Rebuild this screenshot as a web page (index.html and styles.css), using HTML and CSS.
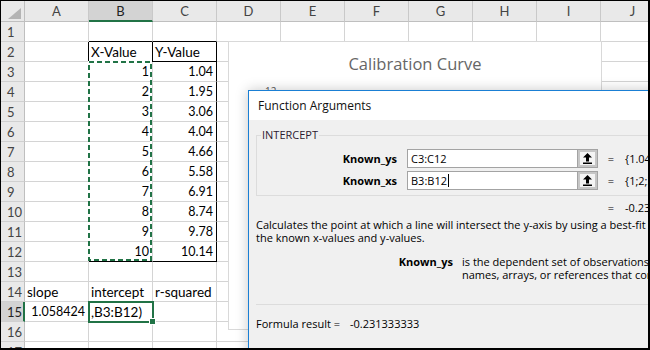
FILE: index.html
```html
<!DOCTYPE html>
<html>
<head>
<meta charset="utf-8">
<link rel="stylesheet" href="styles.css">
</head>
<body>
<div class="frame">
  <div class="sheet">
    <div class="ch corner"><svg width="13" height="11" viewBox="0 0 13 11"><polygon points="13,0 13,11 0,11" fill="#b4b4b4"/></svg></div>
    <div class="ch">A</div><div class="ch sel">B</div><div class="ch">C</div><div class="ch">D</div><div class="ch">E</div><div class="ch">F</div><div class="ch">G</div><div class="ch">H</div><div class="ch">I</div><div class="ch">J</div>

    <div class="rh">1</div><div class="c"></div><div class="c bb"></div><div class="c bb"></div><div class="c"></div><div class="c"></div><div class="c"></div><div class="c"></div><div class="c"></div><div class="c"></div><div class="c"></div>
    <div class="rh">2</div><div class="c br"></div><div class="c br bb">X-Value</div><div class="c br bb">Y-Value</div><div class="c"></div><div class="c"></div><div class="c"></div><div class="c"></div><div class="c"></div><div class="c"></div><div class="c"></div>
    <div class="rh">3</div><div class="c"></div><div class="c n">1</div><div class="c n br">1.04</div><div class="c"></div><div class="c"></div><div class="c"></div><div class="c"></div><div class="c"></div><div class="c"></div><div class="c"></div>
    <div class="rh">4</div><div class="c"></div><div class="c n">2</div><div class="c n br">1.95</div><div class="c"></div><div class="c"></div><div class="c"></div><div class="c"></div><div class="c"></div><div class="c"></div><div class="c"></div>
    <div class="rh">5</div><div class="c"></div><div class="c n">3</div><div class="c n br">3.06</div><div class="c"></div><div class="c"></div><div class="c"></div><div class="c"></div><div class="c"></div><div class="c"></div><div class="c"></div>
    <div class="rh">6</div><div class="c"></div><div class="c n">4</div><div class="c n br">4.04</div><div class="c"></div><div class="c"></div><div class="c"></div><div class="c"></div><div class="c"></div><div class="c"></div><div class="c"></div>
    <div class="rh">7</div><div class="c"></div><div class="c n">5</div><div class="c n br">4.66</div><div class="c"></div><div class="c"></div><div class="c"></div><div class="c"></div><div class="c"></div><div class="c"></div><div class="c"></div>
    <div class="rh">8</div><div class="c"></div><div class="c n">6</div><div class="c n br">5.58</div><div class="c"></div><div class="c"></div><div class="c"></div><div class="c"></div><div class="c"></div><div class="c"></div><div class="c"></div>
    <div class="rh">9</div><div class="c"></div><div class="c n">7</div><div class="c n br">6.91</div><div class="c"></div><div class="c"></div><div class="c"></div><div class="c"></div><div class="c"></div><div class="c"></div><div class="c"></div>
    <div class="rh">10</div><div class="c"></div><div class="c n">8</div><div class="c n br">8.74</div><div class="c"></div><div class="c"></div><div class="c"></div><div class="c"></div><div class="c"></div><div class="c"></div><div class="c"></div>
    <div class="rh">11</div><div class="c"></div><div class="c n">9</div><div class="c n br">9.78</div><div class="c"></div><div class="c"></div><div class="c"></div><div class="c"></div><div class="c"></div><div class="c"></div><div class="c"></div>
    <div class="rh">12</div><div class="c"></div><div class="c n bb">10</div><div class="c n br bb">10.14</div><div class="c"></div><div class="c"></div><div class="c"></div><div class="c"></div><div class="c"></div><div class="c"></div><div class="c"></div>
    <div class="rh">13</div><div class="c"></div><div class="c"></div><div class="c"></div><div class="c"></div><div class="c"></div><div class="c"></div><div class="c"></div><div class="c"></div><div class="c"></div><div class="c"></div>
    <div class="rh">14</div><div class="c">slope</div><div class="c">intercept</div><div class="c">r-squared</div><div class="c"></div><div class="c"></div><div class="c"></div><div class="c"></div><div class="c"></div><div class="c"></div><div class="c"></div>
    <div class="rh sel">15</div><div class="c n">1.058424</div><div class="c active">,B3:B12)</div><div class="c"></div><div class="c"></div><div class="c"></div><div class="c"></div><div class="c"></div><div class="c"></div><div class="c"></div><div class="c"></div>
    <div class="rh">16</div><div class="c"></div><div class="c"></div><div class="c"></div><div class="c"></div><div class="c"></div><div class="c"></div><div class="c"></div><div class="c"></div><div class="c"></div><div class="c"></div>
    <div class="rh">17</div><div class="c"></div><div class="c"></div><div class="c"></div><div class="c"></div><div class="c"></div><div class="c"></div><div class="c"></div><div class="c"></div><div class="c"></div><div class="c"></div>
  </div>

  <svg class="ants" width="65" height="200" viewBox="0 0 65 200">
    <rect x="1" y="1" width="62" height="198" fill="none" stroke="#ffffff" stroke-width="2"/>
    <rect x="1" y="1" width="62" height="198" fill="none" stroke="#217346" stroke-width="2" stroke-dasharray="5 3"/>
  </svg>

  <div class="chart">
    <div class="chart-title">Calibration Curve</div>
    <div class="axis-label">12</div>
  </div>

  <div class="dialog">
    <div class="dlg-title">Function Arguments</div>
    <div class="dlg-body">
      <fieldset class="group">
        <legend>INTERCEPT</legend>
        <div class="arg">
          <span class="arg-name">Known_ys</span>
          <span class="ref"><span class="ref-text">C3:C12</span><span class="ref-btn"><svg width="9" height="11" viewBox="0 0 9 11"><path d="M4.5 0 L9 4.5 L6 4.5 L6 8.5 L3 8.5 L3 4.5 L0 4.5 Z" fill="#000"/><rect x="0" y="9.5" width="9" height="1.5" fill="#000"/></svg></span></span>
          <span class="eq">=</span>
          <span class="val">{1.04;1.95;3.06;4.04;4.66;5.58;6.91;8.74;9.78;10.14}</span>
        </div>
        <div class="arg">
          <span class="arg-name">Known_xs</span>
          <span class="ref"><span class="ref-text">B3:B12<span class="caret"></span></span><span class="ref-btn"><svg width="9" height="11" viewBox="0 0 9 11"><path d="M4.5 0 L9 4.5 L6 4.5 L6 8.5 L3 8.5 L3 4.5 L0 4.5 Z" fill="#000"/><rect x="0" y="9.5" width="9" height="1.5" fill="#000"/></svg></span></span>
          <span class="eq">=</span>
          <span class="val">{1;2;3;4;5;6;7;8;9;10}</span>
        </div>
      </fieldset>
      <div class="result-row"><span class="eq">=</span><span class="val">-0.231333333</span></div>
      <p class="desc">Calculates the point at which a line will intersect the y-axis by using a best-fit regression line plotted through<br>the known x-values and y-values.</p>
      <div class="param">
        <span class="param-name">Known_ys</span>
        <span class="param-desc">is the dependent set of observations or data and can be numbers or<br>names, arrays, or references that contain numbers.</span>
      </div>
      <div class="sep"></div>
      <div class="formula">Formula result =<span class="formula-val">-0.231333333</span></div>
    </div>
  </div>
</div>
</body>
</html>
```

FILE: styles.css
```css
html, body {
  margin: 0;
  padding: 0;
  background: #ffffff;
}

.frame {
  position: relative;
  width: 650px;
  height: 350px;
  box-sizing: border-box;
  border-style: solid;
  border-color: #000;
  border-width: 1px 2px 2px 1px;
  overflow: hidden;
  background: #fff;
}

.sheet {
  display: grid;
  grid-template-columns: 24px repeat(10, 64px);
  grid-template-rows: 21px;
  grid-auto-rows: 20px;
  width: max-content;
  font-family: Lato, "Liberation Sans", sans-serif;
}

.ch {
  box-sizing: border-box;
  background: #e9e9e9;
  border-right: 1px solid #c9c9c9;
  border-bottom: 1px solid #bfbfbf;
  color: #444;
  font-size: 13px;
  line-height: 20px;
  text-align: center;
}

.ch.sel {
  background: #d3d3d3;
  border-bottom: 2px solid #217346;
  color: #222;
}

.corner {
  display: flex;
  align-items: flex-end;
  justify-content: flex-end;
  padding: 0 3px 2px 0;
  border-right: 1px solid #bfbfbf;
}

.corner svg {
  display: block;
}

.rh {
  box-sizing: border-box;
  background: #e9e9e9;
  border-right: 1px solid #bfbfbf;
  border-bottom: 1px solid #d0d0d0;
  color: #444;
  font-size: 13px;
  line-height: 16px;
  padding: 0 0 1px 6px;
  display: flex;
  align-items: flex-end;
}

.rh.sel {
  background: #d3d3d3;
  border-right: 2px solid #217346;
  color: #222;
}

.c {
  box-sizing: border-box;
  border-right: 1px solid #d4d4d4;
  border-bottom: 1px solid #d4d4d4;
  display: flex;
  align-items: flex-end;
  padding: 0 3px 1px 2px;
  font-size: 13.5px;
  line-height: 16px;
  color: #000;
  white-space: nowrap;
  overflow: hidden;
}

.c.n {
  justify-content: flex-end;
  font-size: 12.5px;
}

.c.br {
  border-right-color: #000;
}

.c.bb {
  border-bottom-color: #000;
}

.c.active {
  position: relative;
  overflow: visible;
  outline: 2px solid #217346;
  outline-offset: -1px;
  z-index: 2;
  padding-left: 2px;
}

.c.active::after {
  content: "";
  position: absolute;
  right: -3px;
  bottom: -3px;
  width: 5px;
  height: 5px;
  background: #217346;
  border: 1px solid #fff;
  box-sizing: content-box;
  margin: -1px;
}

.ants {
  position: absolute;
  left: 87px;
  top: 60px;
  z-index: 3;
}

.chart {
  position: absolute;
  left: 227px;
  top: 40px;
  width: 374px;
  height: 289px;
  box-sizing: border-box;
  background: #fff;
  border: 1px solid #d9d9d9;
  z-index: 4;
}

.chart-title {
  margin-top: 11px;
  text-align: center;
  font-family: "Open Sans", Lato, sans-serif;
  font-weight: 400;
  font-size: 16.5px;
  line-height: 22px;
  color: #666;
}

.axis-label {
  position: absolute;
  left: 36px;
  top: 42px;
  font-family: "Open Sans", sans-serif;
  font-size: 10px;
  color: #595959;
}

.dialog {
  position: absolute;
  left: 247px;
  top: 89px;
  width: 430px;
  height: 280px;
  box-sizing: border-box;
  border: 1px solid #1a7fd4;
  background: #f0f0f0;
  box-shadow: 0 0 12px rgba(0, 0, 0, 0.22);
  z-index: 5;
  font-family: "Open Sans", "Noto Sans", sans-serif;
  font-size: 11px;
  color: #000;
}

.dlg-title {
  height: 29px;
  background: #fff;
  padding-left: 9px;
  font-size: 12px;
  line-height: 30px;
  color: #111;
}

.dlg-body {
  padding: 8px 0 0 7px;
}

.group {
  margin: 0;
  padding: 7px 0 5px 0;
  border: 1px solid #dcdcdc;
  border-right: none;
  min-width: 0;
}

.group legend {
  margin-left: 4px;
  padding: 0 1px;
  line-height: 14px;
  color: #2e1a30;
}

.arg {
  display: flex;
  align-items: center;
  height: 19px;
  white-space: nowrap;
}

.arg + .arg {
  margin-top: 3px;
}

.arg-name {
  width: 140px;
  text-align: right;
  font-weight: bold;
  margin-right: 10px;
  flex: none;
}

.ref {
  display: flex;
  width: 191px;
  height: 19px;
  box-sizing: border-box;
  border: 1px solid #a3a3a3;
  background: #fff;
  flex: none;
}

.ref-text {
  flex: 1;
  padding-left: 3px;
  line-height: 17px;
  display: flex;
  align-items: center;
}

.caret {
  display: inline-block;
  width: 0;
  height: 13px;
  border-left: 1px solid #000;
  margin-left: 1px;
}

.ref-btn {
  width: 20px;
  box-sizing: border-box;
  border-left: 1px solid #a3a3a3;
  background: #f4f4f4;
  box-shadow: inset 0 0 0 2px #c6c6c6;
  display: flex;
  align-items: center;
  justify-content: center;
}

.ref-btn svg {
  display: block;
}

.eq {
  width: 26px;
  text-align: center;
  flex: none;
}

.val {
  padding-left: 1px;
  white-space: nowrap;
}

.result-row {
  display: flex;
  margin-top: 5px;
  padding-left: 342px;
  line-height: 14px;
  white-space: nowrap;
}

.desc {
  margin: 3px 0 0 0;
  line-height: 13px;
  white-space: nowrap;
}

.param {
  display: flex;
  margin-top: 11px;
  line-height: 13px;
  white-space: nowrap;
}

.param-name {
  width: 197px;
  text-align: right;
  font-weight: bold;
  margin-right: 9px;
  flex: none;
}

.sep {
  margin-top: 23px;
  height: 1px;
  background: #dcdcdc;
}

.formula {
  margin-top: 12px;
  line-height: 14px;
  white-space: nowrap;
}

.formula-val {
  margin-left: 10px;
}
```
